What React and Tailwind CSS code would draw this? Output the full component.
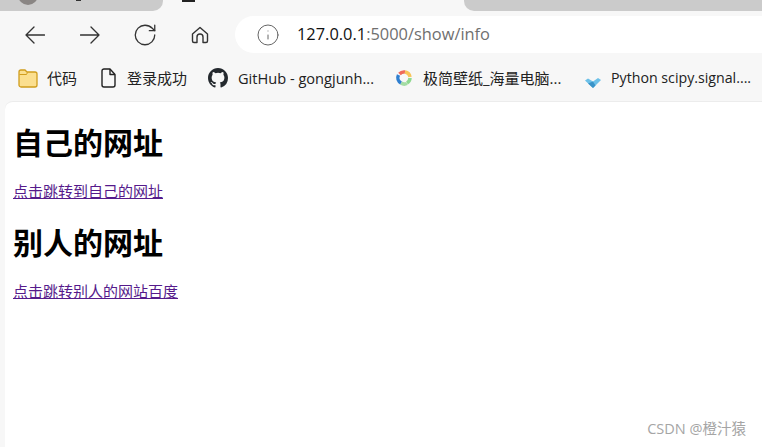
import React from "react";
import { RotateCw, Info } from "lucide-react";

const uiFont = { fontFamily: '"Open Sans", "Noto Sans CJK SC", sans-serif' };

function BackIcon() {
  return (
    <svg width="20" height="18" viewBox="0 0 20 18" fill="none" stroke="#333" strokeWidth="1.300" strokeLinecap="round" strokeLinejoin="round">
      <path d="M19.500 9H1M9 1 1 9l8 8" />
    </svg>
  );
}

function ForwardIcon() {
  return (
    <svg width="20" height="18" viewBox="0 0 20 18" fill="none" stroke="#333" strokeWidth="1.300" strokeLinecap="round" strokeLinejoin="round">
      <path d="M.5 9H19M11 1l8 8-8 8" />
    </svg>
  );
}

function HomeIcon() {
  return (
    <svg width="20" height="20" viewBox="0 0 20 20" fill="none" stroke="#333" strokeWidth="1.4" strokeLinejoin="round">
      <path d="M2.5 9 10 2.5 17.5 9v7a1.5 1.5 0 0 1-1.5 1.5h-3V12a3 3 0 0 0-6 0v5.500H4A1.500 1.500 0 0 1 2.500 16z" />
    </svg>
  );
}

function FolderIcon() {
  return (
    <svg width="20" height="19" viewBox="0 0 20 19">
      <path d="M1 3a2 2 0 0 1 2-2h4l2 2h8a2 2 0 0 1 2 2v11a2 2 0 0 1-2 2H3a2 2 0 0 1-2-2z" fill="#fbdf8f" stroke="#d09d1d" strokeWidth="1.300" />
      <path d="M1.500 5.500h7l1-2" fill="none" stroke="#d09d1d" strokeWidth="1" />
    </svg>
  );
}

function PageIcon() {
  return (
    <svg width="16" height="20" viewBox="0 0 16 20" fill="none" stroke="#222" strokeWidth="1.400" strokeLinejoin="round">
      <path d="M2 3a2 2 0 0 1 2-2h6l5 5.500V17a2 2 0 0 1-2 2H4a2 2 0 0 1-2-2z" />
      <path d="M10 1v5.500h5" />
    </svg>
  );
}

function GithubIcon() {
  return (
    <svg width="20" height="20" viewBox="0 0 16 16" fill="#24292e">
      <path d="M8 0C3.580 0 0 3.580 0 8c0 3.540 2.290 6.530 5.470 7.590.4.070.55-.17.55-.38 0-.19-.01-.82-.01-1.490-2.010.37-2.530-.49-2.690-.94-.09-.23-.48-.94-.82-1.130-.28-.15-.68-.52-.01-.53.630-.01 1.080.58 1.230.82.720 1.210 1.870.87 2.330.66.070-.52.280-.87.510-1.070-1.780-.2-3.640-.89-3.640-3.950 0-.87.310-1.590.820-2.150-.08-.2-.36-1.020.08-2.120 0 0 .67-.21 2.200.82a7.420 7.420 0 0 1 4 0c1.530-1.040 2.200-.82 2.200-.82.440 1.100.16 1.920.08 2.120.51.560.82 1.270.82 2.150 0 3.070-1.870 3.750-3.650 3.950.29.250.54.730.54 1.480 0 1.070-.01 1.930-.01 2.200 0 .21.150.46.550.38A8.010 8.010 0 0 0 16 8c0-4.420-3.580-8-8-8z" />
    </svg>
  );
}

function WallpaperIcon() {
  return (
    <svg width="18" height="18" viewBox="0 0 18 18" fill="none" strokeWidth="3.500">
      <path d="M4.500 5 A6 6 0 0 1 10 3" stroke="#ef6a5a" />
      <path d="M10 3 A6 6 0 0 1 15 8" stroke="#f8c55a" />
      <path d="M15 9 A6 6 0 0 1 12 14" stroke="#8fd98f" />
      <path d="M12 14.500 A6 6 0 0 1 6 14" stroke="#a4dca4" />
      <path d="M6 14 A6 6 0 0 1 3.500 6" stroke="#2f7fd0" />
    </svg>
  );
}

function CheckIcon() {
  return (
    <svg width="16" height="12" viewBox="0 0 16 12" className="mt-[9px]">
      <path d="M0 3.500 3 1.500 8 4.500 13 1l3 2-8 8z" fill="#6cc0e8" />
      <path d="M3 6.500 8 11l2.500-2.500L8 4.500z" fill="#3a93c8" />
    </svg>
  );
}

function Bookmark({ icon, label, className }) {
  return (
    <div className={`flex items-center shrink-0 leading-5 text-[#222] whitespace-nowrap ${className}`}>
      {icon}
      <span>{label}</span>
    </div>
  );
}

export default function App() {
  return (
    <div className="relative w-[762px] h-[447px] overflow-hidden bg-[#f7f7f7]" style={uiFont}>
      {/* tab strip */}
      <div className="flex h-[11px] justify-between">
        <div className="w-[163px] bg-[#cbcbcb] rounded-br-[10px]" />
        <div className="w-[298px] bg-[#cbcbcb] rounded-bl-[10px]" />
      </div>
      <div className="absolute left-[18px] top-[-15px] w-[20px] h-[20px] rounded-full bg-[#8a8684]" />
      <div className="absolute left-[76px] top-0 w-[5px] h-[1px] bg-[#333]" />
      <div className="absolute left-[182px] top-0 w-[13px] h-[2px] bg-[#222]" />

      {/* toolbar */}
      <div className="flex items-center h-[37px] mt-[5px]">
        <div className="flex items-center pl-[25px] w-[235px]">
          <BackIcon />
          <div className="ml-[35px]"><ForwardIcon /></div>
          <RotateCw size={26} strokeWidth={1.200} color="#333" className="ml-[32px]" />
          <div className="ml-[32px]"><HomeIcon /></div>
        </div>
        <div className="flex items-center flex-1 h-[37px] bg-white rounded-l-full pl-[21px]">
          <Info size={24} strokeWidth={1} color="#666" />
          <span className="ml-[17px] text-[16.4px] text-[#111] whitespace-nowrap">
            127.0.0.1<span className="text-[#6f6f6f]">:5000/show/info</span>
          </span>
        </div>
      </div>

      {/* bookmarks */}
      <div className="flex items-center h-[48px] pl-[18px] pt-[2px]">
        <Bookmark icon={<FolderIcon />} label="代码" className="w-[82px] gap-[9px] text-[15px]" />
        <Bookmark icon={<PageIcon />} label="登录成功" className="w-[108px] gap-[11px] text-[15px]" />
        <Bookmark icon={<GithubIcon />} label="GitHub - gongjunh..." className="w-[187px] gap-[10px] text-[14.600px]" />
        <Bookmark icon={<WallpaperIcon />} label="极简壁纸_海量电脑..." className="w-[190px] gap-[10px] text-[15px]" />
        <Bookmark icon={<CheckIcon />} label="Python scipy.signal...." className="gap-[10px] text-[14.200px]" />
      </div>

      {/* page */}
      <div className="h-[346px] ml-[5px] bg-white rounded-tl-[8px] border-t border-[#ececec] pl-[8px] pt-[22px] [font-family:'Noto_Sans_CJK_SC',sans-serif]">
        <h1 className="text-[30px] font-bold leading-[34px] text-black">自己的网址</h1>
        <a href="#" className="block mt-[23px] text-[15px] leading-[20px] text-[#551a8b] underline">点击跳转到自己的网址</a>
        <h1 className="mt-[23px] text-[30px] font-bold leading-[34px] text-black">别人的网址</h1>
        <a href="#" className="block mt-[23px] text-[15px] leading-[20px] text-[#551a8b] underline">点击跳转别人的网站百度</a>
      </div>

      {/* watermark */}
      <div className="absolute right-[16px] bottom-[8px] text-[14.500px] leading-5 text-[#a5a5a5] whitespace-nowrap">CSDN @橙汁猿</div>
    </div>
  );
}
